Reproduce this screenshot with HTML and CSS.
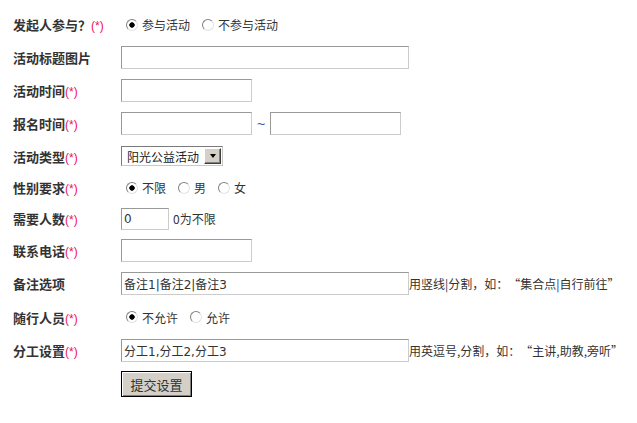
FILE: index.html
```html
<!DOCTYPE html>
<html lang="zh-CN">
<head>
    <meta charset="UTF-8">
    <meta name="viewport" content="width=device-width, initial-scale=1.0">
    <title>活动设置</title>
    <link rel="stylesheet" href="styles.css">
</head>
<body>

<form class="setting-form">
    <div class="row">
        <div class="label">发起人参与<span class="fw">？</span><span class="req">(*)</span></div>
        <div class="field">
            <label class="opt"><input type="radio" name="join" checked>参与活动</label>
            <label class="opt"><input type="radio" name="join">不参与活动</label>
        </div>
    </div>
    <div class="row">
        <div class="label">活动标题图片</div>
        <div class="field"><input type="text" class="txt txt-wide"></div>
    </div>
    <div class="row">
        <div class="label">活动时间<span class="req">(*)</span></div>
        <div class="field"><input type="text" class="txt txt-short"></div>
    </div>
    <div class="row">
        <div class="label">报名时间<span class="req">(*)</span></div>
        <div class="field">
            <input type="text" class="txt txt-short">
            <span class="tilde">~</span>
            <input type="text" class="txt txt-short">
        </div>
    </div>
    <div class="row row-select">
        <div class="label">活动类型<span class="req">(*)</span></div>
        <div class="field">
            <div class="select-box">
                <span class="select-text">阳光公益活动</span>
                <span class="select-btn"><span class="arrow"></span></span>
            </div>
        </div>
    </div>
    <div class="row row-s">
        <div class="label">性别要求<span class="req">(*)</span></div>
        <div class="field">
            <label class="opt"><input type="radio" name="sex" checked>不限</label>
            <label class="opt"><input type="radio" name="sex">男</label>
            <label class="opt"><input type="radio" name="sex">女</label>
        </div>
    </div>
    <div class="row row-s">
        <div class="label">需要人数<span class="req">(*)</span></div>
        <div class="field">
            <input type="text" class="txt txt-num" value="0">
            <span class="tip tip-gap">0为不限</span>
        </div>
    </div>
    <div class="row">
        <div class="label">联系电话<span class="req">(*)</span></div>
        <div class="field"><input type="text" class="txt txt-short"></div>
    </div>
    <div class="row">
        <div class="label">备注选项</div>
        <div class="field">
            <input type="text" class="txt txt-wide" value="备注1|备注2|备注3">
            <span class="tip">用竖线|分割，如：<span class="fw fw-r">“</span>集合点|自行前往<span class="fw">”</span></span>
        </div>
    </div>
    <div class="row row-l">
        <div class="label">随行人员<span class="req">(*)</span></div>
        <div class="field">
            <label class="opt"><input type="radio" name="follow" checked>不允许</label>
            <label class="opt"><input type="radio" name="follow">允许</label>
        </div>
    </div>
    <div class="row row-m">
        <div class="label">分工设置<span class="req">(*)</span></div>
        <div class="field">
            <input type="text" class="txt txt-wide" value="分工1,分工2,分工3">
            <span class="tip">用英逗号,分割，如：<span class="fw fw-r">“</span>主讲,助教,旁听<span class="fw">”</span></span>
        </div>
    </div>
    <div class="row row-btn">
        <div class="label"></div>
        <div class="field"><button type="button" class="submit-btn">提交设置</button></div>
    </div>
</form>

</body>
</html>
```

FILE: styles.css
```css
/* Page */
body {
    margin: 8px;
    font-family: "Liberation Sans", "Noto Sans CJK SC", sans-serif;
    font-size: 12px;
    color: #333;
    background: #fff;
}

/* Rows */
.row {
    display: flex;
    align-items: center;
    height: 33px;
}

.row-select { height: 32px; }
.row-s { height: 31px; }
.row-l { height: 34px; }
.row-m { height: 32px; }
.row-btn { height: 36px; }

.label {
    width: 108px;
    padding-left: 5px;
    flex-shrink: 0;
    font-family: "Noto Sans CJK SC", sans-serif;
    font-size: 13px;
    font-weight: bold;
    color: #333;
    white-space: nowrap;
}

.req {
    font-family: "Liberation Sans", sans-serif;
    font-weight: normal;
    font-size: 12px;
    color: #f0105a;
}

/* full-width punctuation cell */
.fw {
    display: inline-block;
    width: 1em;
    text-align: left;
}

.fw-r { text-align: right; }

.field {
    display: flex;
    align-items: center;
    white-space: nowrap;
}

/* Text inputs */
.txt {
    box-sizing: border-box;
    height: 23px;
    margin: 0;
    padding: 0 2px;
    border: 1px solid;
    border-color: #999 #ccc #ccc #999;
    font-family: "DejaVu Sans", "Noto Sans CJK SC", sans-serif;
    font-size: 12px;
    color: #333;
    outline: none;
}

.txt-wide { width: 288px; }
.txt-short { width: 131px; }
.txt-num { width: 48px; height: 22px; }

.tilde {
    width: 18px;
    text-align: center;
    color: #3355aa;
    font-size: 14px;
}

.tip {
    font-family: "Noto Sans CJK SC", sans-serif;
    font-size: 12px;
    color: #333;
}

.tip-gap { margin-left: 4px; }

/* Radios */
.opt {
    display: inline-flex;
    align-items: center;
    margin-right: 7px;
    font-family: "Noto Sans CJK SC", sans-serif;
    font-size: 12px;
    color: #333;
}

.opt input {
    appearance: none;
    -webkit-appearance: none;
    box-sizing: border-box;
    width: 12px;
    height: 12px;
    margin: 0 4px 0 5px;
    border-radius: 50%;
    border: 1px solid;
    border-color: #808080 #e2e2e2 #e2e2e2 #808080;
    background: #fff;
}

.opt input:checked {
    background: radial-gradient(circle, #000 0 2.4px, #fff 3px);
}

/* Select */
.select-box {
    box-sizing: border-box;
    display: flex;
    align-items: center;
    width: 102px;
    height: 20px;
    border: 1px solid;
    border-color: #7a7a7a #c8c8c8 #c8c8c8 #7a7a7a;
    background: #fff;
}

.select-text {
    flex: 1;
    padding-left: 5px;
    font-family: "Noto Sans CJK SC", sans-serif;
    font-size: 12px;
    color: #222;
}

.select-btn {
    box-sizing: border-box;
    display: flex;
    align-items: center;
    justify-content: center;
    width: 17px;
    height: 16px;
    margin-right: 1px;
    background: #d4d0c8;
    border: 1px solid;
    border-color: #fff #404040 #404040 #fff;
    box-shadow: inset -1px -1px #808080;
}

.arrow {
    width: 0;
    height: 0;
    border-left: 3.5px solid transparent;
    border-right: 3.5px solid transparent;
    border-top: 4px solid #000;
}

/* Submit button */
.submit-btn {
    box-sizing: border-box;
    width: 71px;
    height: 26px;
    margin: 0;
    padding: 0;
    background: #d4d0c8;
    border: 1px solid #000;
    box-shadow: inset 1px 1px #fff, inset -1px -1px #808080;
    font-family: "Noto Sans CJK SC", sans-serif;
    font-size: 13px;
    color: #333;
}
```
